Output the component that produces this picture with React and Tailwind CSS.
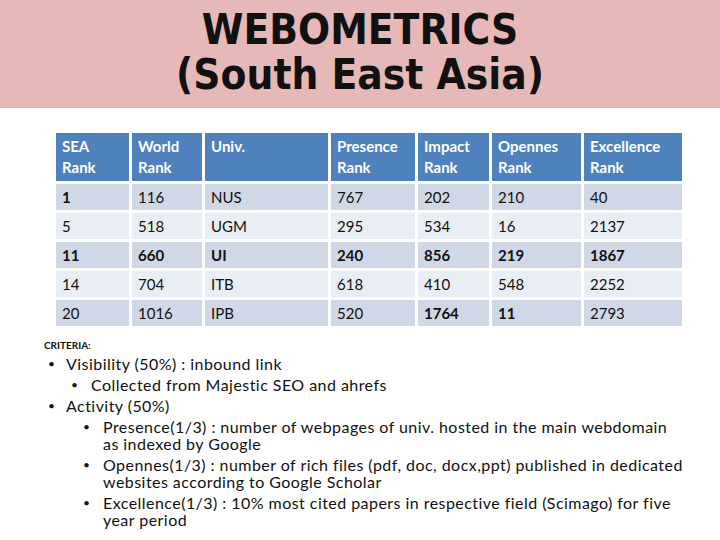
import React from 'react';

const headers = [
  ['SEA', 'Rank'],
  ['World', 'Rank'],
  ['Univ.', ''],
  ['Presence', 'Rank'],
  ['Impact', 'Rank'],
  ['Opennes', 'Rank'],
  ['Excellence', 'Rank'],
];

const rows = [
  { cells: ['1', '116', 'NUS', '767', '202', '210', '40'], bold: [true, false, false, false, false, false, false] },
  { cells: ['5', '518', 'UGM', '295', '534', '16', '2137'], bold: [] },
  { cells: ['11', '660', 'UI', '240', '856', '219', '1867'], bold: [true, true, true, true, true, true, true] },
  { cells: ['14', '704', 'ITB', '618', '410', '548', '2252'], bold: [] },
  { cells: ['20', '1016', 'IPB', '520', '1764', '11', '2793'], bold: [false, false, false, false, true, true, false] },
];

const cols = 'grid grid-cols-[73px_70px_123px_84px_71px_89px_98px] gap-[3px]';

function Bullet({ indent, gap = 18, children }) {
  return (
    <div className="flex mt-[4px]" style={{ paddingLeft: indent }}>
      <span className="shrink-0 text-[12px] leading-[17px]" style={{ width: gap }}>•</span>
      <span className="leading-[17px]">{children}</span>
    </div>
  );
}

export default function App() {
  return (
    <div className="w-[720px] h-[540px] bg-white overflow-hidden" style={{ fontFamily: 'Lato, "Open Sans", sans-serif' }}>
      {/* title band */}
      <div className="h-[108px] bg-[#e6b8b7] flex flex-col items-center pt-[7px]">
        <h1
          className="text-[42px] leading-[45px] font-bold text-[#111] text-center"
          style={{ fontFamily: '"DejaVu Sans Condensed", "DejaVu Sans", sans-serif', fontStretch: 'condensed' }}
        >
          WEBOMETRICS
          <br />
          (South East Asia)
        </h1>
      </div>

      {/* table */}
      <div className="ml-[56px] mt-[25px] w-[630px] text-[15px] text-[#111]">
        <div className={cols}>
          {headers.map((h, i) => (
            <div key={i} className="bg-[#4f81bd] h-[48px] px-[6px] pt-[3px] leading-[21px] font-bold text-white">
              <div>{h[0]}</div>
              <div>{h[1]}</div>
            </div>
          ))}
        </div>
        {rows.map((r, ri) => (
          <div key={ri} className={cols + ' mt-[3px]'}>
            {r.cells.map((c, ci) => (
              <div
                key={ci}
                className={
                  (ri % 2 === 0 ? 'bg-[#d0d8e8]' : 'bg-[#e9edf4]') +
                  ' h-[26px] px-[6px] flex items-center' +
                  (r.bold[ci] ? ' font-bold' : '')
                }
              >
                {c}
              </div>
            ))}
          </div>
        ))}
      </div>

      {/* criteria */}
      <div className="ml-[44px] mt-[13px] w-[640px] text-[#111]">
        <div className="text-[10px] font-bold leading-[12px]">CRITERIA:</div>
        <div className="text-[16px] tracking-[0.45px]">
          <Bullet indent={4}>Visibility (50%) : inbound link</Bullet>
          <Bullet indent={27} gap={20}>Collected from Majestic SEO and ahrefs</Bullet>
          <Bullet indent={4}>Activity (50%)</Bullet>
          <Bullet indent={39} gap={20}>Presence(1/3) : number of webpages of univ. hosted in the main webdomain as indexed by Google</Bullet>
          <Bullet indent={39} gap={20}>Opennes(1/3) : number of rich files (pdf, doc, docx,ppt) published in dedicated websites according to Google Scholar</Bullet>
          <Bullet indent={39} gap={20}>Excellence(1/3) : 10% most cited papers in respective field (Scimago) for five year period</Bullet>
        </div>
      </div>
    </div>
  );
}
